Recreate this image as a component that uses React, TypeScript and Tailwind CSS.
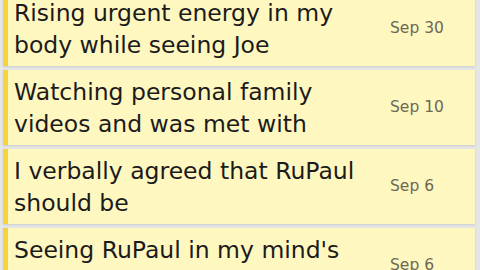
import React from "react";

const items = [
  { lines: ["Rising urgent energy in my", "body while seeing Joe"], date: "Sep 30" },
  { lines: ["Watching personal family", "videos and was met with"], date: "Sep 10" },
  { lines: ["I verbally agreed that RuPaul", "should be"], date: "Sep 6" },
  { lines: ["Seeing RuPaul in my mind's", "eye while thinking about"], date: "Sep 6" },
];

export default function App() {
  return (
    <div
      className="h-[270px] overflow-hidden bg-[#e6e6e6] pl-[3px] pr-[5px]"
      style={{ fontFamily: '"DejaVu Sans", sans-serif' }}
    >
      <div className="-mt-[9px] flex flex-col gap-[4px]">
        {items.map((it, i) => (
          <div
            key={i}
            className="flex h-[75px] items-center border-l-[5px] border-[#f3d43f] bg-[#fff7c0] shadow-[0_1px_2px_rgba(0,0,0,0.12)]"
          >
            <div className="flex-1 pl-[6px] text-[23.5px] leading-[32px] text-[#1b1b1b]">
              {it.lines.map((l, j) => (
                <div key={j} className="whitespace-nowrap">
                  {l}
                </div>
              ))}
            </div>
            <div className="w-[85px] text-[15.5px] text-[#6d6955]">{it.date}</div>
          </div>
        ))}
      </div>
    </div>
  );
}
